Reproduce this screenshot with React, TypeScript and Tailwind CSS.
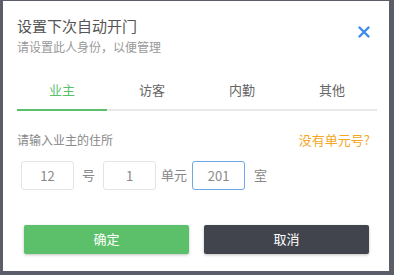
import React, { useState } from 'react';

const tabs = ['业主', '访客', '内勤', '其他'];

const App: React.FC = () => {
  const [active, setActive] = useState(0);

  return (
    <div
      className="w-[394px] h-[275px] bg-[#5b5e68] pl-[3px] pr-[5px] pt-px pb-[4px]"
      style={{ fontFamily: '"Noto Sans CJK SC", "Noto Sans", sans-serif' }}
    >
      <div className="w-full h-full bg-white pl-[14px] pr-[10px] pt-[15px] flex flex-col">
        {/* Header */}
        <div className="flex justify-between items-start">
          <div>
            <div className="text-[15px] leading-[20px] text-[#555]">设置下次自动开门</div>
            <div className="text-[12px] leading-[17px] text-[#999] mt-[2px]">请设置此人身份，以便管理</div>
          </div>
          <button className="mt-[10px] mr-[9px] text-[#3b8beb]">
            <svg width="12" height="12" viewBox="0 0 12 12" fill="none" stroke="currentColor" strokeWidth="2.4" strokeLinecap="round">
              <path d="M1.5 1.5 L10.5 10.5 M10.5 1.5 L1.5 10.5" />
            </svg>
          </button>
        </div>

        {/* Tabs */}
        <div className="mt-[20px] w-[360px] flex border-b-[2px] border-[#e8e8e8]">
          {tabs.map((t, i) => (
            <button
              key={t}
              onClick={() => setActive(i)}
              className={`flex-1 h-[36px] -mb-[2px] text-[13px] pb-[4px] border-b-[2px] ${
                active === i ? 'text-[#5cbf6a] border-[#5cbf6a]' : 'text-[#666] border-transparent'
              }`}
            >
              {t}
            </button>
          ))}
        </div>

        {/* Address */}
        <div className="mt-[19px] mr-[9px] flex justify-between items-center">
          <span className="text-[12px] text-[#888]">请输入业主的住所</span>
          <span className="text-[13px] text-[#f5a623]">没有单元号?</span>
        </div>

        <div className="mt-[11px] pl-[4px] flex items-center text-[13px] text-[#888]">
          <input
            defaultValue="12"
            className="w-[53px] h-[29px] border border-[#e4e4e4] rounded-[3px] text-center outline-none text-[#888]"
          />
          <span className="mx-[8px] text-[#888]">号</span>
          <input
            defaultValue="1"
            className="w-[53px] h-[29px] border border-[#e4e4e4] rounded-[3px] text-center outline-none text-[#888]"
          />
          <span className="mx-[5px] text-[#888]">单元</span>
          <input
            defaultValue="201"
            className="w-[53px] h-[29px] border border-[#6ea6ea] rounded-[3px] text-center outline-none text-[#888]"
          />
          <span className="ml-[9px] text-[#888]">室</span>
        </div>

        {/* Buttons */}
        <div className="mt-[35px] pl-[7px] flex gap-[15px]">
          <button className="w-[165px] h-[29px] bg-[#5cbf6a] text-white text-[13px] rounded-[2px] shadow-[0_1px_3px_rgba(0,0,0,0.25)]">
            确定
          </button>
          <button className="w-[165px] h-[29px] bg-[#41444d] text-white text-[13px] rounded-[2px] shadow-[0_1px_3px_rgba(0,0,0,0.25)]">
            取消
          </button>
        </div>
      </div>
    </div>
  );
};

export default App;
